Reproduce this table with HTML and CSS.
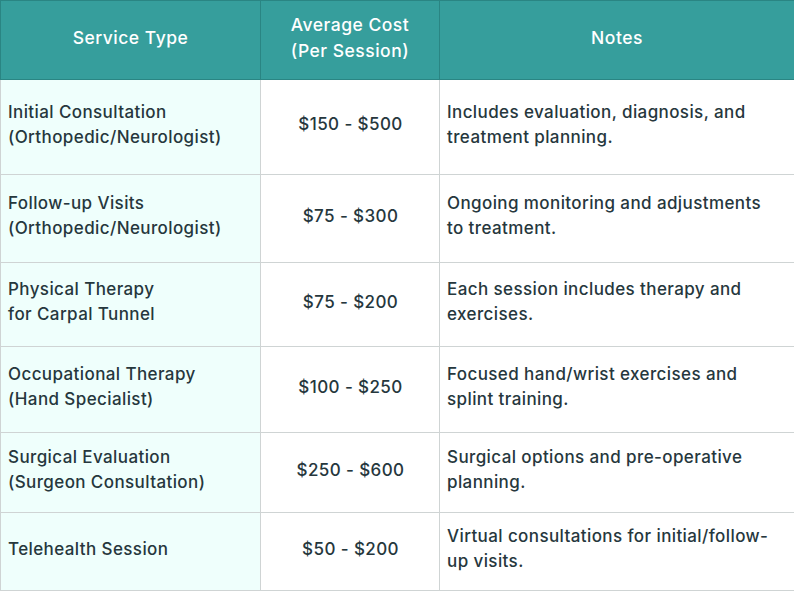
FILE: index.html
```html
<!DOCTYPE html>
<html>
<head>
<meta charset="utf-8">
<link rel="stylesheet" href="styles.css">
</head>
<body>
<table class="cost-table">
  <colgroup>
    <col class="c1"><col class="c2"><col class="c3">
  </colgroup>
  <thead>
    <tr class="head">
      <th>Service Type</th>
      <th>Average Cost<br>(Per Session)</th>
      <th>Notes</th>
    </tr>
  </thead>
  <tbody>
    <tr class="r1">
      <td class="svc">Initial Consultation<br>(Orthopedic/Neurologist)</td>
      <td class="cost">$150 - $500</td>
      <td class="note">Includes evaluation, diagnosis, and treatment planning.</td>
    </tr>
    <tr class="r2">
      <td class="svc">Follow-up Visits<br>(Orthopedic/Neurologist)</td>
      <td class="cost">$75 - $300</td>
      <td class="note">Ongoing monitoring and adjustments to treatment.</td>
    </tr>
    <tr class="r3">
      <td class="svc">Physical Therapy<br>for Carpal Tunnel</td>
      <td class="cost">$75 - $200</td>
      <td class="note">Each session includes therapy and exercises.</td>
    </tr>
    <tr class="r4">
      <td class="svc">Occupational Therapy<br>(Hand Specialist)</td>
      <td class="cost">$100 - $250</td>
      <td class="note">Focused hand/wrist exercises and splint training.</td>
    </tr>
    <tr class="r5">
      <td class="svc">Surgical Evaluation<br>(Surgeon Consultation)</td>
      <td class="cost">$250 - $600</td>
      <td class="note">Surgical options and pre-operative planning.</td>
    </tr>
    <tr class="r6">
      <td class="svc">Telehealth Session</td>
      <td class="cost">$50 - $200</td>
      <td class="note">Virtual consultations for initial/follow-up visits.</td>
    </tr>
  </tbody>
</table>
</body>
</html>
```
FILE: styles.css
```css
html, body {
  margin: 0;
  padding: 0;
  background: #ffffff;
}
body {
  font-family: "Inter", "Liberation Sans", sans-serif;
  color: #26373d;
}
.cost-table {
  width: 794px;
  border-collapse: collapse;
  table-layout: fixed;
}
.c1 { width: 260px; }
.c2 { width: 179px; }
.c3 { width: 355px; }
.head th {
  background: #369e9c;
  color: #ffffff;
  font-weight: 500;
  font-size: 17.5px;
  letter-spacing: 0.5px;
  line-height: 26px;
  height: 74px;
  padding: 0 7px 4px;
  border: 1px solid #2a8583;
  text-align: center;
  vertical-align: middle;
}
td {
  border: 1px solid #cfd4d4;
  font-size: 17px;
  letter-spacing: 0.4px;
  font-weight: 500;
  line-height: 25px;
  padding: 0 6px 5px 7px;
  vertical-align: middle;
}
td.svc {
  background: #effffc;
  text-align: left;
}
td.cost {
  text-align: center;
}
td.note {
  text-align: left;
  padding-right: 18px;
}
.r1 td { height: 89px; }
.r2 td { height: 82px; }
.r3 td { height: 78px; }
.r4 td { height: 80px; }
.r5 td { height: 74px; }
.r6 td { height: 72px; }
```
